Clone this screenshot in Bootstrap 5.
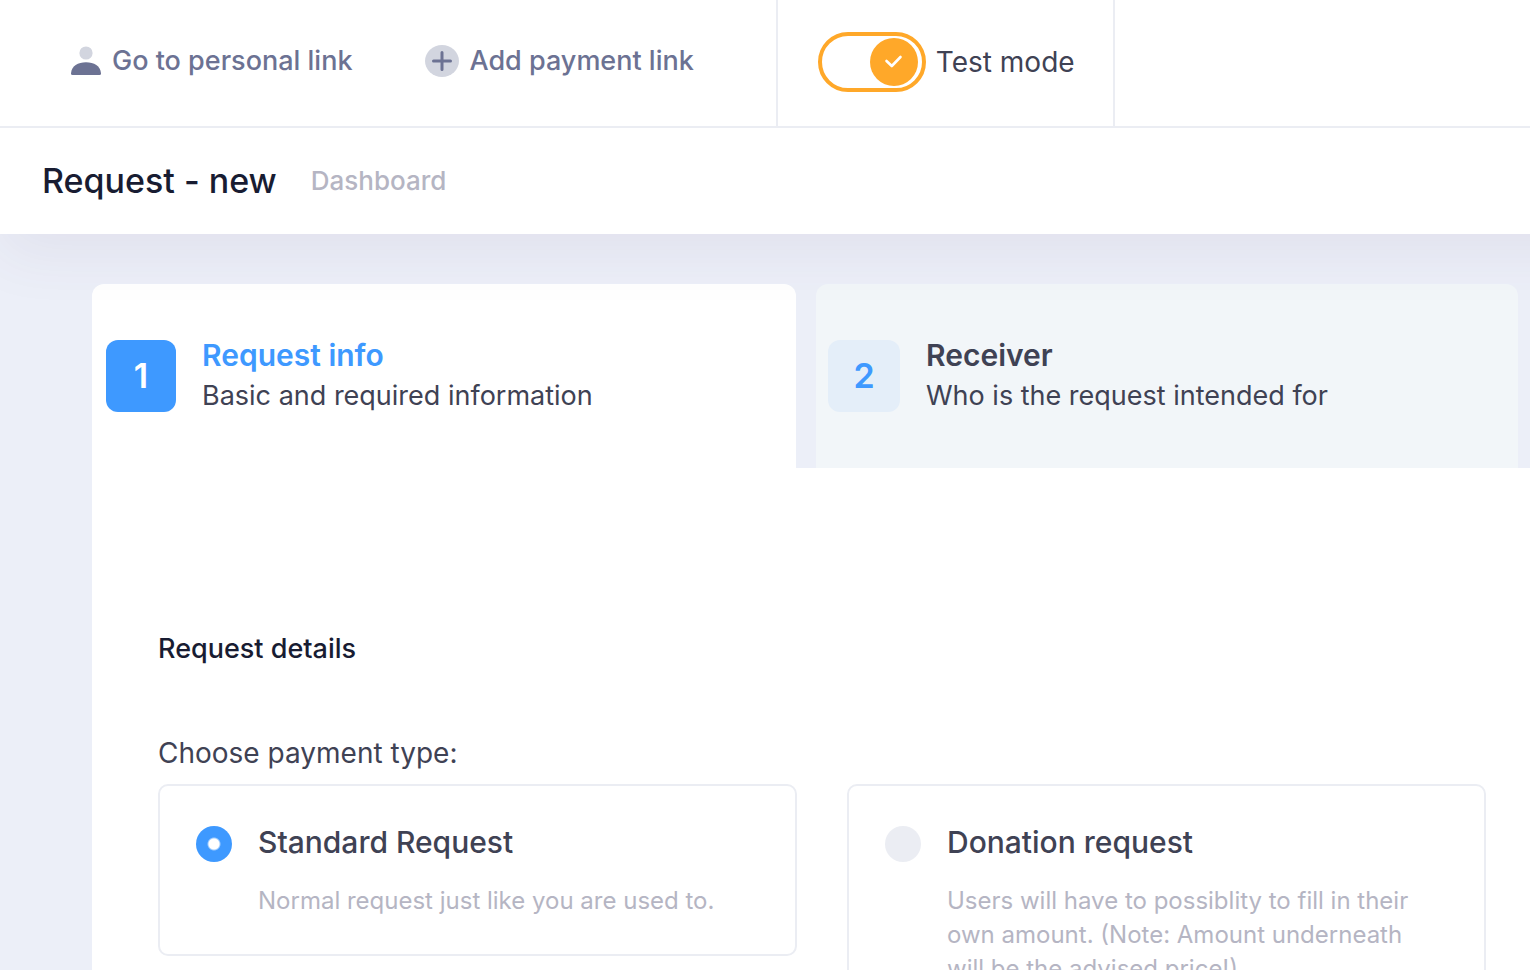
<!DOCTYPE html>
<html lang="en">
<head>
<meta charset="utf-8">
<meta name="viewport" content="width=device-width, initial-scale=1">
<title>Request - new</title>
<link href="https://cdn.jsdelivr.net/npm/bootstrap@5.3.0/dist/css/bootstrap.min.css" rel="stylesheet">
<style>
  :root { --ink: #3f4254; --dark: #181c32; --muted: #b5b5c3; --line: #ebedf3; --brand: #3e99ff; --slate: #6c7293; --warn: #ffa829; }
  body { font-family: Inter, "Open Sans", sans-serif; font-size: 28px; line-height: 40px; color: var(--ink); background: #eceff8; }
  .topbar { height: 128px; border-bottom: 2px solid var(--line); z-index: 3; }
  .quick-links { padding: 0 82px 4px 70px; gap: 73px; }
  .quick-link { color: var(--slate); gap: 10px; font-size: 27px; font-weight: 500; }
  .test-cell { padding: 0 38px 2px 40px; gap: 10px; border: solid var(--line); border-width: 0 2px; }
  .test-switch { appearance: none; width: 108px; height: 60px; margin: 0; border: 4px solid var(--warn); border-radius: 30px;
    background: #fff no-repeat right 4px center / 48px 48px; }
  .test-switch:checked { background-image: url("data:image/svg+xml,%3Csvg xmlns='http://www.w3.org/2000/svg' viewBox='0 0 48 48'%3E%3Ccircle cx='24' cy='24' r='24' fill='%23ffa829'/%3E%3Cpath d='M16.500 23l5.300 5 8.700-9' fill='none' stroke='%23fff' stroke-width='2.600' stroke-linecap='round' stroke-linejoin='round'/%3E%3C/svg%3E"); }
  /* runs past the right edge so that the shadow fades on the left only */
  .subheader { height: 106px; margin-right: -100px; padding: 0 42px; gap: 34px; box-shadow: 0 20px 60px rgba(82, 63, 105, .07); z-index: 2; }
  .page-title { font-size: 34px; font-weight: 500; color: var(--dark); }
  .crumb { font-size: 26px; font-weight: 500; color: var(--muted); }
  .wizard { padding: 50px 0 0 92px; }
  .steps { gap: 20px; padding-right: 12px; }
  .step-tab { flex: 1 1 0; height: 184px; padding: 0 12px; gap: 26px; border: 0; border-radius: 12px 12px 0 0; background: #f2f6f9; color: var(--ink); text-align: left; }
  .step-tab.active { background: #fff; padding-left: 14px; }
  .step-no { width: 72px; height: 72px; flex: none; border-radius: 12px; background: #e4eef9; color: var(--brand); font-size: 34px; font-weight: 600; }
  .active .step-no { background: var(--brand); color: #fff; width: 70px; }
  .step-name { font-size: 30px; font-weight: 600; }
  .step-note { font-size: 27px; line-height: 42px; }
  .active .step-name { color: var(--brand); }
  .panel { padding: 161px 44px 60px 66px; }
  .section-title { font-size: 27px; line-height: 40px; font-weight: 500; color: var(--dark); margin-bottom: 64px; }
  .type-label { font-size: 28px; line-height: 40px; margin-bottom: 11px; }
  .types { gap: 50px; }
  .type-card { flex: 1 1 0; padding: 36px 48px 36px 36px; gap: 26px; border: 2px solid var(--line); border-radius: 10px; }
  .type-radio { appearance: none; width: 36px; height: 36px; flex: none; margin: 4px 0 0; border-radius: 50%; background: var(--line); }
  .type-radio:checked { background: radial-gradient(circle, #fff 5px, var(--brand) 7px); }
  .type-name { font-size: 30px; font-weight: 500; margin-bottom: 22px; }
  .type-note { font-size: 24px; line-height: 34px; color: var(--muted); }
</style>
</head>
<body>
<div class="vh-100 overflow-hidden">
  <header class="topbar bg-white position-relative d-flex">
    <nav class="quick-links d-flex align-items-center" aria-label="Quick links">
      <a class="quick-link d-flex align-items-center text-decoration-none" href="#">
        <svg width="32" height="34" viewBox="0 0 32 34" aria-hidden="true"><circle cx="16" cy="9" r="6.600" fill="#d2d5df"/><path d="M1 29.500C1.500 22 8 18.300 16 18.300S30.500 22 31 29.500q0 1.500-1.500 1.500h-27Q1 31 1 29.500z" fill="#6c7293"/></svg>
        <span>Go to personal link</span>
      </a>
      <a class="quick-link d-flex align-items-center text-decoration-none" href="#">
        <svg width="34" height="34" viewBox="0 0 34 34" aria-hidden="true"><ellipse cx="17" cy="17" rx="17" ry="16" fill="#d2d5df"/><path d="M17 8.500v17M8.500 17h17" stroke="#6c7293" stroke-width="3" stroke-linecap="round"/></svg>
        <span>Add payment link</span>
      </a>
    </nav>
    <div class="test-cell d-flex align-items-center">
      <input class="test-switch" type="checkbox" role="switch" id="testMode" checked>
      <label for="testMode">Test mode</label>
    </div>
  </header>

  <div class="subheader bg-white position-relative d-flex align-items-center">
    <h1 class="page-title m-0">Request - new</h1>
    <a class="crumb text-decoration-none" href="#">Dashboard</a>
  </div>

  <main class="wizard">
    <div class="steps d-flex">
      <button class="step-tab active d-flex align-items-center" type="button">
        <span class="step-no d-flex align-items-center justify-content-center">1</span>
        <span><span class="step-name d-block">Request info</span><span class="step-note d-block">Basic and required information</span></span>
      </button>
      <button class="step-tab d-flex align-items-center" type="button">
        <span class="step-no d-flex align-items-center justify-content-center">2</span>
        <span><span class="step-name d-block">Receiver</span><span class="step-note d-block">Who is the request intended for</span></span>
      </button>
    </div>
    <form class="panel bg-white">
      <h2 class="section-title">Request details</h2>
      <fieldset>
        <legend class="type-label">Choose payment type:</legend>
        <div class="types d-flex align-items-start">
          <label class="type-card d-flex align-items-start" for="standard">
            <input class="type-radio" type="radio" name="type" id="standard" checked>
            <span><span class="type-name d-block">Standard Request</span><span class="type-note d-block">Normal request just like you are used to.</span></span>
          </label>
          <label class="type-card d-flex align-items-start" for="donation">
            <input class="type-radio" type="radio" name="type" id="donation">
            <span><span class="type-name d-block">Donation request</span><span class="type-note d-block">Users will have to possiblity to fill in their own amount. (Note: Amount underneath will be the advised price!)</span></span>
          </label>
        </div>
      </fieldset>
    </form>
  </main>
</div>
<script src="https://cdn.jsdelivr.net/npm/bootstrap@5.3.0/dist/js/bootstrap.bundle.min.js"></script>
</body>
</html>
